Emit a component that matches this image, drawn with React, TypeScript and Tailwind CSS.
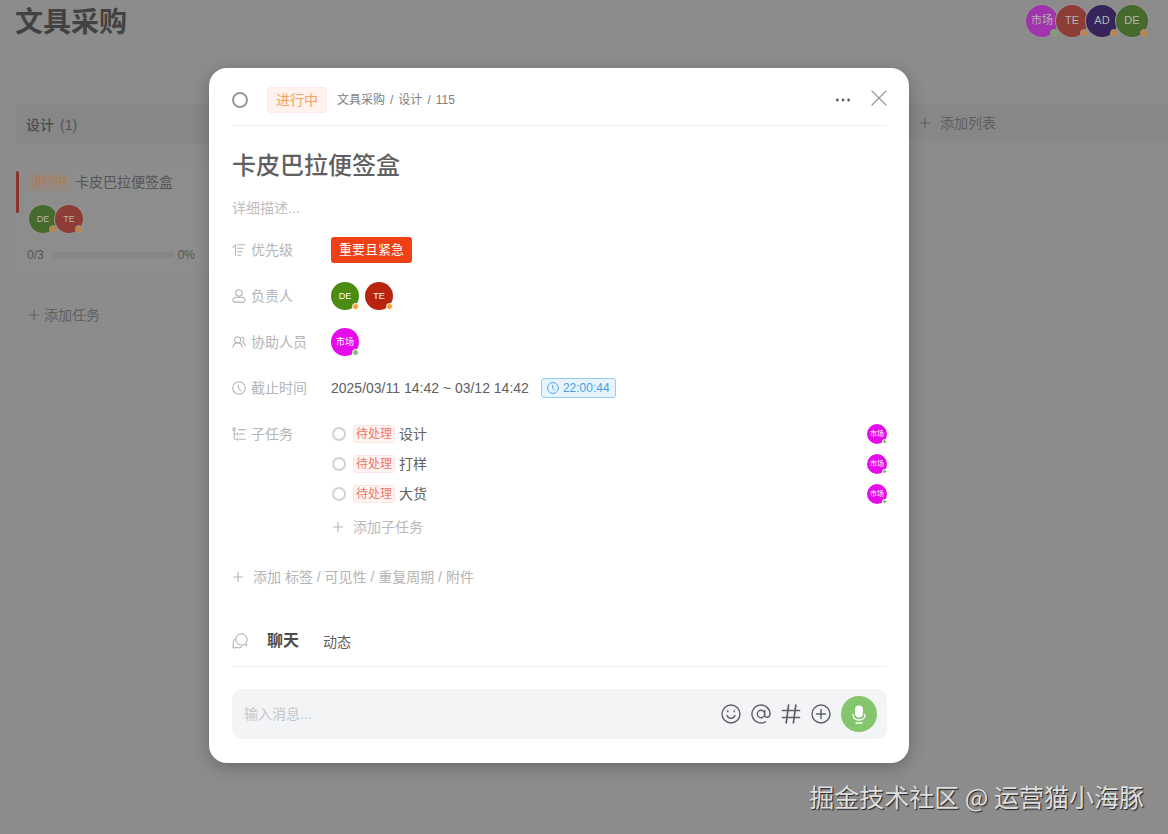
import type { ReactNode } from "react";

type Person = {
  name: string;
  color: string;
  dot: string;
};

//colors for people in the task dialog
const de: Person = { name: "DE", color: "bg-[#4c8c10]", dot: "bg-[#ff9f2e]" };
const te: Person = { name: "TE", color: "bg-[#b92411]", dot: "bg-[#ff9f2e]" };
const market: Person = {
  name: "市场",
  color: "bg-[#e60cea]",
  dot: "bg-[#7fc06a]",
};

//dimmed versions for the board behind the dialog
const boardDe: Person = {
  name: "DE",
  color: "bg-[#466a2c]",
  dot: "bg-[#c28342]",
};
const boardTe: Person = {
  name: "TE",
  color: "bg-[#8e3c36]",
  dot: "bg-[#c28342]",
};
const boardAd: Person = {
  name: "AD",
  color: "bg-[#36245a]",
  dot: "bg-[#c28342]",
};
const boardMarket: Person = {
  name: "市场",
  color: "bg-[#a034aa]",
  dot: "bg-[#7fa070]",
};

const subtasks = ["设计", "打样", "大货"];

export default function App() {
  return (
    <div className="relative min-h-screen overflow-hidden bg-[#8c8c8c] font-['Liberation_Sans','Noto_Sans_CJK_SC',sans-serif] text-sm text-[#606060]">
      <Board />
      <div className="absolute inset-0 flex items-start justify-center pt-[68px] pr-[50px]">
        <TaskDialog />
      </div>
      <div className="absolute right-6 bottom-5 font-['Noto_Sans_CJK_SC',sans-serif] text-[25px] leading-9 text-[#dedede] [text-shadow:1px_1px_1px_#222]">
        掘金技术社区 @ 运营猫小海豚
      </div>
    </div>
  );
}

function Board() {
  return (
    <div className="flex flex-col">
      <header className="flex h-[42px] items-center justify-between pr-5 pl-[15px]">
        <h1 className="pt-1 text-[28px] leading-8 font-bold text-[#424242]">
          文具采购
        </h1>
        <div className="flex -space-x-0.5">
          {[boardMarket, boardTe, boardAd, boardDe].map((p) => (
            <Avatar
              key={p.name}
              person={p}
              size="size-8 text-[11px] ring-1 ring-[#929292] text-[#b4b4b4]"
              dotSize="size-2 border-[#929292]"
            />
          ))}
        </div>
      </header>
      <main className="mt-[62px] flex items-start pl-4">
        <section className="w-[193px] flex-none">
          <div className="flex h-10 items-center gap-1.5 bg-[#878787] px-2.5 pt-0.5 text-[#4c4c4c]">
            <h2 className="font-medium">设计</h2>
            <span className="text-[#555555]">(1)</span>
          </div>
          <BoardCard />
          <button className="mt-8 flex items-center gap-[5px] pl-[13px] leading-5 text-[#606060]">
            <PlusIcon className="size-2.5" />
            添加任务
          </button>
        </section>
        <div className="flex-1"></div>
        <section className="w-[259px] flex-none bg-[#878787]">
          <button className="flex h-[37px] items-center gap-2.5 pl-[11px] text-[#5f5f5f]">
            <PlusIcon className="size-2.5" />
            添加列表
          </button>
        </section>
      </main>
    </div>
  );
}

function BoardCard() {
  return (
    <article className="mt-5 flex h-[109px] bg-[#8d8d8d] pt-[7px] text-[#555555]">
      <div className="h-[42px] w-[3px] flex-none rounded bg-[#8e322e]"></div>
      <div className="flex-1 pr-3.5 pl-2">
        <div className="flex h-[22px] items-center gap-1">
          <span className="rounded bg-[#918a85] px-1 text-xs leading-5 text-[#b57a4c]">
            进行中
          </span>
          <span className="whitespace-nowrap">卡皮巴拉便签盒</span>
        </div>
        <div className="mt-3 flex -space-x-0.5 pl-0.5">
          {[boardDe, boardTe].map((p) => (
            <Avatar
              key={p.name}
              person={p}
              size="size-7 text-[9px] ring-1 ring-[#929292] text-[#b4b4b4]"
              dotSize="size-2 border-[#929292]"
            />
          ))}
        </div>
        <div className="mt-3 flex items-center gap-2 text-xs leading-5">
          <span>0/3</span>
          <div className="h-1.5 flex-1 rounded-full bg-[#868686]"></div>
          <span className="-ml-1">0%</span>
        </div>
      </div>
    </article>
  );
}

function TaskDialog() {
  return (
    <div
      role="dialog"
      aria-label="卡皮巴拉便签盒"
      className="w-full max-w-[700px] rounded-[18px] bg-white pr-[22px] pb-6 pl-[23px] shadow-[0_4px_16px_rgba(0,0,0,0.25)]"
    >
      <header className="flex h-[58px] items-center border-b border-[#efefef] pt-1.5">
        <input
          type="checkbox"
          aria-label="完成任务"
          className="size-4 appearance-none rounded-full border-2 border-[#9a9a9a]"
        />
        <span className="ml-[19px] rounded-sm border border-[#ffe9e5] bg-[#fff1ee] px-2 leading-6 text-[#f9a05c]">
          进行中
        </span>
        <nav className="ml-2.5 flex gap-[5px] text-xs text-[#808080]">
          <a href="#project">文具采购</a>
          <span>/</span>
          <a href="#column">设计</a>
          <span>/</span>
          <a href="#task">115</a>
        </nav>
        <button aria-label="更多" className="ml-auto text-[#5c5c5c]">
          <svg viewBox="0 0 16 16" className="size-4" fill="currentColor">
            <circle cx="2.4" cy="8" r="1.4" />
            <circle cx="8" cy="8" r="1.4" />
            <circle cx="13.6" cy="8" r="1.4" />
          </svg>
        </button>
        <button aria-label="关闭" className="ml-5 pb-1 text-[#999999]">
          <Icon className="size-4">
            <path d="M1 1l14 14M15 1L1 15" />
          </Icon>
        </button>
      </header>

      <h2 className="mt-6 text-2xl leading-8 font-medium text-[#606060]">
        卡皮巴拉便签盒
      </h2>
      <textarea
        aria-label="详细描述"
        placeholder="详细描述..."
        rows={1}
        className="mt-4 block h-5 w-full resize-none overflow-hidden leading-5 placeholder:text-[#bdbdbd]"
      />

      <div className="mt-[9px]">
        <Field label="优先级" icon={<PriorityIcon />}>
          <span className="rounded-[3px] bg-[#ee4014] px-2 text-[13px] leading-[26px] text-white">
            重要且紧急
          </span>
        </Field>
        <Field label="负责人" icon={<PersonIcon />}>
          <DialogAvatar person={de} />
          <DialogAvatar person={te} />
        </Field>
        <Field label="协助人员" icon={<PeopleIcon />}>
          <DialogAvatar person={market} />
        </Field>
        <Field label="截止时间" icon={<ClockIcon className="size-3.5" />}>
          <span>2025/03/11 14:42 ~ 03/12 14:42</span>
          <span className="ml-1.5 flex h-5 items-center gap-1 rounded-[3px] border border-[#94cdf2] bg-[#e6f5fd] px-[5px] text-xs text-[#4a9fe4]">
            <ClockIcon className="size-3" />
            22:00:44
          </span>
        </Field>
        <div className="flex items-start">
          <FieldLabel label="子任务" icon={<TreeIcon />} />
          <div className="flex-1 pt-2">
            <ul>
              {subtasks.map((name) => (
                <SubtaskRow key={name} name={name} />
              ))}
            </ul>
            <button className="flex h-9 items-center gap-2.5 pl-0.5 text-[#b8b8b8]">
              <PlusIcon className="size-2.5" />
              添加子任务
            </button>
          </div>
        </div>
      </div>

      <button className="mt-4 flex h-8 items-center gap-2.5 pl-px text-[#b4b4b4]">
        <PlusIcon className="size-2.5" />
        添加 标签 / 可见性 / 重复周期 / 附件
      </button>

      <div className="mt-[18px] flex h-14 items-center border-b border-[#efefef] pt-1">
        <ChatIcon />
        <button className="ml-[19px] text-base leading-6 font-bold text-[#4c4c4c]">
          聊天
        </button>
        <button className="ml-6 pt-0.5 leading-6">动态</button>
      </div>

      <MessageBox />
    </div>
  );
}

type FieldProps = {
  label: string;
  icon: ReactNode;
  children?: ReactNode;
};

function FieldLabel({ label, icon }: FieldProps) {
  return (
    <div className="flex h-[46px] w-[99px] flex-none items-center gap-[5px] text-[#b4b4b4]">
      {icon}
      {label}
    </div>
  );
}

function Field({ label, icon, children }: FieldProps) {
  return (
    <div className="flex items-center">
      <FieldLabel label={label} icon={icon} />
      <div className="flex flex-1 items-center gap-1.5">{children}</div>
    </div>
  );
}

function SubtaskRow({ name }: { name: string }) {
  return (
    <li className="flex h-[30px] items-center">
      <label className="flex items-center">
        <input
          type="checkbox"
          className="ml-px size-3.5 appearance-none rounded-full border-2 border-[#d2d2d2]"
        />
        <span className="mr-1 ml-[7px] rounded-[3px] border border-[#fde4e0] bg-[#fff4f2] px-0.5 text-xs leading-4 text-[#ee7468]">
          待处理
        </span>
        {name}
      </label>
      <div className="ml-auto">
        <Avatar
          person={market}
          size="size-5 text-[7px] text-white"
          dotSize="size-[5px] border-white"
        />
      </div>
    </li>
  );
}

function MessageBox() {
  return (
    <div className="mt-[22px] flex h-[50px] items-center rounded-[10px] bg-[#f3f4f6] pr-2.5 pl-3">
      <input
        type="text"
        aria-label="输入消息"
        placeholder="输入消息..."
        className="min-w-0 flex-1 placeholder:text-[#c4c6c8]"
      />
      <div className="flex items-center gap-2.5 text-[#5e6064]">
        <button aria-label="表情">
          <ToolIcon>
            <circle cx="10" cy="10" r="9" />
            <path d="M6 11.5c.8 1.800 2.200 2.800 4 2.800s3.200-1 4-2.800M6.800 6.800v1M13.200 6.800v1" />
          </ToolIcon>
        </button>
        <button aria-label="提及">
          <ToolIcon>
            <circle cx="10" cy="10" r="3.700" />
            <path d="M13.700 6.500v4.700c0 3.200 5.300 2.500 5.300-1.200a9 9 0 1 0-4.500 7.800" />
          </ToolIcon>
        </button>
        <button aria-label="话题">
          <ToolIcon>
            <path
              strokeWidth="1.7"
              d="M1.500 6.500h17M1.500 13.500h17M7.600 1.200L5.200 18.800M14.800 1.200l-2.400 17.600"
            />
          </ToolIcon>
        </button>
        <button aria-label="附件">
          <ToolIcon>
            <circle cx="10" cy="10" r="9" />
            <path d="M10 5.500v9M5.500 10h9" />
          </ToolIcon>
        </button>
        <button
          aria-label="语音"
          className="flex size-9 items-center justify-center rounded-full bg-[#85c56d] text-white"
        >
          <svg
            viewBox="0 0 14 19"
            className="h-[19px] w-3.5"
            fill="none"
            stroke="currentColor"
            strokeWidth="1.3"
            strokeLinecap="round"
          >
            <rect
              x="3"
              y="0.500"
              width="8"
              height="12"
              rx="4"
              fill="currentColor"
              stroke="none"
            />
            <path d="M1 9.500c0 3.500 2.500 5.500 6 5.500s6-2 6-5.500M4 18h6" />
          </svg>
        </button>
      </div>
    </div>
  );
}

function Avatar({
  person,
  size,
  dotSize,
}: {
  person: Person;
  size: string;
  dotSize: string;
}) {
  return (
    <div
      className={`relative flex flex-none items-center justify-center rounded-full ${person.color} ${size}`}
    >
      {person.name}
      <span
        className={`absolute right-0 bottom-0 rounded-full border ${person.dot} ${dotSize}`}
      ></span>
    </div>
  );
}

function DialogAvatar({ person }: { person: Person }) {
  return (
    <Avatar
      person={person}
      size="size-7 text-[9px] text-white"
      dotSize="size-[7px] border-white"
    />
  );
}

function Icon({
  className,
  children,
}: {
  className: string;
  children: ReactNode;
}) {
  return (
    <svg
      viewBox="0 0 16 16"
      className={`flex-none ${className}`}
      fill="none"
      stroke="currentColor"
      strokeWidth="1.2"
      strokeLinecap="round"
      strokeLinejoin="round"
    >
      {children}
    </svg>
  );
}

function ToolIcon({ children }: { children: ReactNode }) {
  return (
    <svg
      viewBox="0 0 20 20"
      className="size-5"
      fill="none"
      stroke="currentColor"
      strokeWidth="1.4"
      strokeLinecap="round"
    >
      {children}
    </svg>
  );
}

function PlusIcon({ className }: { className: string }) {
  return (
    <Icon className={className}>
      <path d="M8 0.500v15M0.500 8h15" strokeWidth="1.800" />
    </Icon>
  );
}

function ClockIcon({ className }: { className: string }) {
  return (
    <Icon className={className}>
      <circle cx="8" cy="8" r="7.200" />
      <path d="M7.500 4.500v4l2.500 2.500" />
    </Icon>
  );
}

function PriorityIcon() {
  return (
    <Icon className="size-3.5">
      <path d="M1 5l3-3v12M6.500 2H15M6.500 6H13M6.500 10H12M6.500 14H10" />
    </Icon>
  );
}

function PersonIcon() {
  return (
    <Icon className="size-3.5">
      <circle cx="8" cy="4.500" r="3.700" />
      <path d="M5 9.500h6c2.500 0 4 1.500 4 3.700 0 1-.7 1.800-1.800 1.800H2.800C1.700 15 1 14.200 1 13.200c0-2.200 1.500-3.700 4-3.700z" />
    </Icon>
  );
}

function PeopleIcon() {
  return (
    <Icon className="size-3.5">
      <circle cx="6.500" cy="5.500" r="3.500" />
      <path d="M1 14c.4-3 2.500-5 5.500-5s5 2 5.500 5M11 2.200c2.800.3 3.500 4.300 1 6 1.700.8 2.700 2.300 3 4.300" />
    </Icon>
  );
}

function TreeIcon() {
  return (
    <Icon className="size-3.5">
      <circle cx="2.500" cy="2.500" r="1.500" />
      <path d="M2.500 4v8.500c0 1 .5 1.500 1.500 1.500h2.500M2.500 8h4M7.500 3H15M8.500 8H14M8.500 14H15M6.500 7v2M6.500 13v2" />
    </Icon>
  );
}

function ChatIcon() {
  return (
    <svg
      viewBox="0 0 16 16"
      className="size-4 flex-none text-[#aaaaaa]"
      fill="none"
      stroke="currentColor"
      strokeLinejoin="round"
    >
      <path d="M13.800 10.200A5.700 5.700 0 1 0 9.500 12.200q1.300 0 2.500-.6l2.800.6z" />
      <path d="M3.600 5.500A5.500 5.500 0 0 0 1.200 11L1 15l4-.5c2 .8 4 .4 5.300-1.500" />
    </svg>
  );
}
